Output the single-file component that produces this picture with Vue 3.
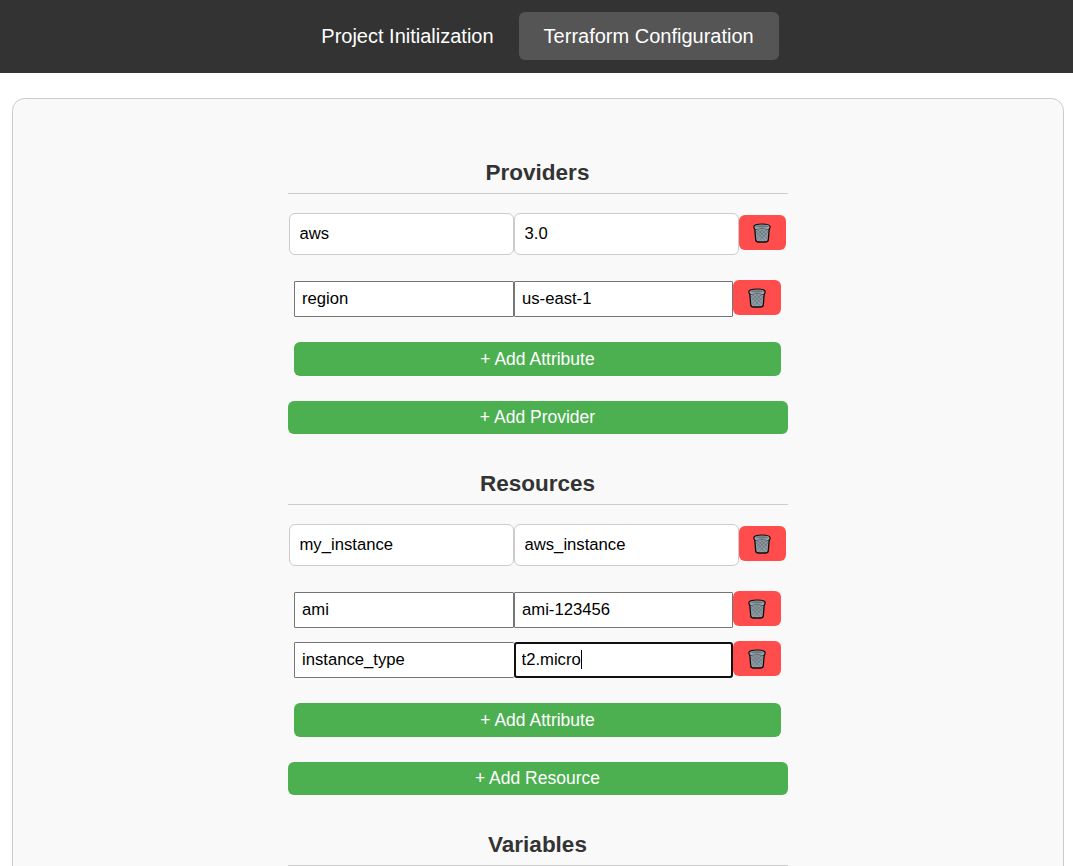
<script setup>
import { reactive } from 'vue'

const sections = reactive([
  {
    title: 'Providers',
    addLabel: '+ Add Provider',
    head: ['aws', '3.0'],
    attributes: [{ name: 'region', value: 'us-east-1' }],
  },
  {
    title: 'Resources',
    addLabel: '+ Add Resource',
    head: ['my_instance', 'aws_instance'],
    attributes: [
      { name: 'ami', value: 'ami-123456' },
      { name: 'instance_type', value: 't2.micro', active: true },
    ],
  },
])
</script>

<template>
  <svg class="defs" width="0" height="0" aria-hidden="true">
    <defs>
      <symbol id="trash" viewBox="0 0 18 20">
        <path d="M1.7 5L2.7 16.8Q3 19 5.5 19L12.5 19Q15 19 15.3 16.8L16.3 5Z" fill="#8f9ca4" stroke="#0c0c0c" stroke-width="1.3" stroke-linejoin="round" />
        <path d="M3.5 9L12 17.6M4.5 6.4L14 15.6M8 6.4L14.4 12.6M12 6.4L15 9.2M14.5 9L6 17.6M13.5 6.4L4 15.6M10 6.4L3.6 12.6M6 6.4L3 9.2" fill="none" stroke="#56646d" stroke-width="0.6" />
        <path d="M0.8 3.9Q0.8 1 9 1Q17.2 1 17.2 3.9Q17.2 5.6 15.6 5.9L2.4 5.9Q0.8 5.6 0.8 3.9Z" fill="#8f9ca4" stroke="#0c0c0c" stroke-width="1.2" />
        <path d="M2.6 3.6Q3.4 2.3 9 2.3Q14.6 2.3 15.4 3.6Q14.6 4.4 9 4.4Q3.4 4.4 2.6 3.6Z" fill="#6b7981" />
        <path d="M2.2 4.9Q4 6.2 9 6.2Q14 6.2 15.8 4.9" fill="none" stroke="#9ba8af" stroke-width="1.3" />
      </symbol>
    </defs>
  </svg>
  <div class="page">
    <nav class="nav">
      <button class="tab">Project Initialization</button>
      <button class="tab active">Terraform Configuration</button>
    </nav>
    <main class="card">
      <section v-for="s in sections" :key="s.title" class="section">
        <h2>{{ s.title }}</h2>
        <div class="row">
          <input v-for="(v, i) in s.head" :key="i" v-model="s.head[i]" class="main-input" />
          <button class="delete"><svg><use href="#trash" /></svg></button>
        </div>
        <div class="attributes">
          <div v-for="a in s.attributes" :key="a.name" class="attribute">
            <input v-model="a.name" class="plain" />
            <div class="field" :class="{ focused: a.active }">
              <input v-model="a.value" class="plain" />
              <i v-if="a.active" class="caret"></i>
            </div>
            <button class="delete"><svg><use href="#trash" /></svg></button>
          </div>
          <button class="add add-attribute">+ Add Attribute</button>
        </div>
        <button class="add add-section">{{ s.addLabel }}</button>
      </section>
      <section class="section">
        <h2>Variables</h2>
      </section>
    </main>
  </div>
</template>

<style>
html, body { overflow: hidden; background: #fff; }
</style>

<style scoped>
* { box-sizing: border-box; }
.defs { position: absolute; }
.page {
  height: 866px;
  overflow: hidden;
  font-family: "Liberation Sans", Arial, sans-serif;
}
button, input { font-family: inherit; margin: 0; border: 0; }
.nav {
  height: 73px;
  padding: 12px 0 13px 2px;
  display: flex;
  justify-content: center;
  background: #333;
}
.tab {
  height: 48px;
  padding: 0 25px;
  border-radius: 6px;
  background: transparent;
  color: #fff;
  font-size: 20px;
  white-space: nowrap;
}
.tab.active { background: #555; }
.card {
  width: 1052px;
  height: 1000px;
  margin: 25px 0 0 12px;
  padding: 50px 0 0 275px;
  border: 1px solid #ccc;
  border-radius: 12.5px;
  background: #f9f9f9;
}
.section { width: 500px; height: 311px; }
.section + .section { height: 361px; }
h2 {
  height: 45px;
  margin: 0;
  padding: 11px 1px 0 0;
  border-bottom: 1px solid #ccc;
  color: #333;
  font-size: 22.5px;
  line-height: 26px;
  text-align: center;
}
.row { display: flex; margin: 19px 0 0 1px; height: 42px; }
input {
  background: #fff;
  color: #000;
  font-size: 16.67px;
  outline: none;
}
.main-input {
  width: 225px;
  height: 42px;
  padding: 0 10px 1px 9.5px;
  border: 1px solid #ccc;
  border-radius: 6px;
}
.delete {
  width: 47px;
  height: 35px;
  padding: 1px 0 0;
  border-radius: 6px;
  background: #ff4d4d;
  display: flex;
  align-items: center;
  justify-content: center;
}
.delete svg { width: 18px; height: 20px; }
.row .delete { margin-top: 2px; padding-right: 1px; }
.attributes { margin: 26px 0 0 6px; width: 487px; }
.attribute { display: flex; height: 36px; }
.attribute + .attribute { margin-top: 14px; }
.attribute .delete { width: 48px; margin-top: -1px; }
.plain {
  width: 220px;
  height: 36px;
  padding: 0 7px 1px;
  border: 1px solid #767676;
  border-radius: 1px;
}
.field { position: relative; width: 219px; }
.field .plain { width: 219px; }
.focused .plain {
  border: 2px solid #101010;
  border-radius: 3px;
  padding: 0 6px 1px 5.5px;
  box-shadow: -1px 0 0 #fff;
}
.caret {
  position: absolute;
  left: 67px;
  top: 8px;
  width: 1px;
  height: 19px;
  background: #000;
}
.add {
  display: block;
  padding: 0;
  border-radius: 6px;
  background: #4caf50;
  color: #fff;
  font-size: 17.5px;
  text-align: center;
}
.add-attribute { width: 487px; height: 34px; margin-top: 25px; }
.add-section { width: 500px; height: 33px; margin-top: 25px; padding-right: 1px; }
</style>
